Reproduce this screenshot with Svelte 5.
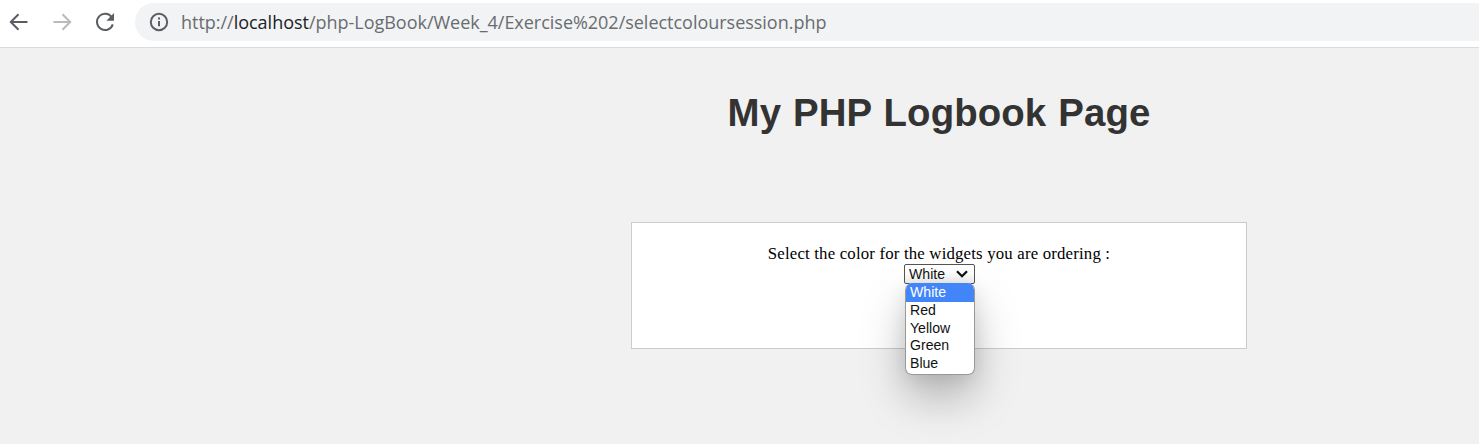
<script>
  const colours = ['White', 'Red', 'Yellow', 'Green', 'Blue'];
  let selected = $state('White');
</script>

<div class="window">
  <header class="toolbar">
    <svg class="back" width="20" height="20" viewBox="0 0 20 20"><path d="M18.5 10H2.2M9.5 2.2L1.8 10l7.7 7.8" /></svg>
    <svg class="forward" width="20" height="20" viewBox="0 0 20 20"><path d="M1.4 10h16.2M10.5 2.2l7.7 7.8-7.7 7.8" /></svg>
    <svg class="reload" width="20" height="20" viewBox="0 0 20 20">
      <path d="M16.7 5.2A8.1 8.1 0 1 0 17.8 12.4" />
      <path class="solid" d="M19 1v7.7h-7.6z" />
    </svg>
    <div class="address">
      <svg class="info" width="20" height="20" viewBox="0 0 20 20">
        <circle cx="10" cy="10" r="8.2" />
        <path d="M10 9v5.3M10 5.6v2" />
      </svg>
      <span class="url">http://<b>localhost</b>/php-LogBook/Week_4/Exercise%202/selectcoloursession.php</span>
    </div>
  </header>
  <main>
    <h1>My PHP Logbook Page</h1>
    <section>
      <p>Select the color for the widgets you are ordering :</p>
      <div class="picker">
        <div class="field">
          <span>{selected}</span>
          <svg width="12" height="8" viewBox="0 0 12 8"><path d="M1 1.2l5 5 5-5" /></svg>
        </div>
        <div class="options">
          {#each colours as colour}
            <div class="option" class:active={colour === selected}>{colour}</div>
          {/each}
        </div>
      </div>
    </section>
  </main>
</div>

<style>
  .window {
    height: 444px;
    overflow: hidden;
    display: flex;
    flex-direction: column;
    background: #f1f1f1;
  }
  .toolbar {
    box-sizing: border-box;
    height: 48px;
    flex: none;
    display: flex;
    align-items: center;
    padding: 0 0 4px 9px;
    background: #fff;
    border-bottom: 1px solid #dadbdd;
  }
  svg {
    flex: none;
    fill: none;
    stroke: #5b5e63;
    stroke-width: 2;
  }
  .forward {
    margin-left: 23px;
    stroke: #b9babc;
  }
  .reload {
    margin-left: 23px;
  }
  .solid {
    fill: #5b5e63;
    stroke: none;
  }
  .address {
    box-sizing: border-box;
    flex: 1;
    height: 38px;
    margin-left: 20px;
    padding-left: 14px;
    display: flex;
    align-items: center;
    background: #f1f3f4;
    border-radius: 19px 0 0 19px;
  }
  .url {
    margin-left: 12px;
    white-space: nowrap;
    font: 18px/24px "Open Sans", sans-serif;
    letter-spacing: -0.02px;
    color: #696c70;
  }
  .url b {
    font-weight: 400;
    color: #202124;
  }
  main {
    display: flex;
    flex-direction: column;
    align-items: center;
    width: 616px;
    margin-left: 631px;
  }
  h1 {
    margin: 42px 0 0;
    font: bold 38.4px/46px "Liberation Sans", Arial, sans-serif;
    letter-spacing: 0.1px;
    word-spacing: 1.2px;
    color: #333;
  }
  section {
    box-sizing: border-box;
    width: 616px;
    height: 127px;
    margin-top: 86px;
    padding-top: 21px;
    display: flex;
    flex-direction: column;
    align-items: center;
    background: #fff;
    border: 1px solid #ccc;
  }
  p {
    margin: 0 0 1px;
    font: 16.8px/19px "Liberation Serif", "Times New Roman", serif;
    letter-spacing: 0.18px;
    color: #000;
  }
  .picker {
    position: relative;
    width: 71px;
    margin-left: 1px;
    font: 14.1px/18px "Liberation Sans", Arial, sans-serif;
    color: #111;
  }
  .field {
    box-sizing: border-box;
    height: 20px;
    display: flex;
    align-items: center;
    justify-content: space-between;
    padding: 0 6px 0 4px;
    border: 1px solid #555;
    border-radius: 2px;
    background: linear-gradient(#fff 40%, #f0f0f0);
  }
  .field svg {
    stroke: #111;
    stroke-width: 2.3;
  }
  .options {
    position: absolute;
    left: 1px;
    top: 19px;
    box-sizing: border-box;
    width: 70px;
    height: 92px;
    overflow: hidden;
    border: 1px solid #999;
    border-top: 0;
    border-radius: 7px;
    background: #fff;
    box-shadow: 0 22px 44px rgba(0, 0, 0, 0.26), 0 4px 18px rgba(0, 0, 0, 0.08);
  }
  .option {
    height: 17.7px;
    padding-left: 4px;
    line-height: 16.6px;
  }
  .active {
    height: 19px;
    line-height: 18px;
    background: #4285f9;
    color: #fff;
  }
</style>
